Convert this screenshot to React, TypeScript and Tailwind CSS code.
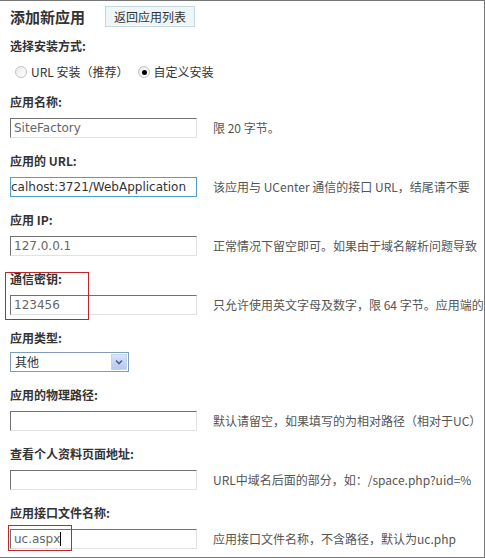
import React from "react";

const cjk = { fontFamily: '"Noto Sans CJK SC", "DejaVu Sans", sans-serif' };
const latin = { fontFamily: '"DejaVu Sans", "Noto Sans CJK SC", sans-serif' };

function Label({ children }: { children: React.ReactNode }) {
  return (
    <div className="h-4 text-[12px] leading-4 font-bold text-[#333] whitespace-nowrap" style={cjk}>
      {children}
    </div>
  );
}

function Field({
  value,
  hint,
  focused,
  caret,
}: {
  value?: string;
  hint: React.ReactNode;
  focused?: boolean;
  caret?: boolean;
}) {
  return (
    <div className="flex items-center h-5 whitespace-nowrap">
      <div
        className={
          "relative w-[187px] h-5 shrink-0 overflow-hidden flex items-center bg-white " +
          (focused
            ? "border border-[#4ba3bf]"
            : "border border-t-[#707070] border-l-[#707070] border-r-[#e2e2e2] border-b-[#e2e2e2]")
        }
      >
        <span
          className={"text-[12px] leading-4 pl-[3px] " + (focused ? "text-[#333] -ml-[3px]" : "text-[#666]")}
          style={latin}
        >
          {value}
        </span>
        {caret && <span className="w-px h-[14px] bg-black" />}
      </div>
      <div className="ml-4 text-[12px] leading-4 text-[#555]" style={cjk}>
        {hint}
      </div>
    </div>
  );
}

function Radio({ checked }: { checked?: boolean }) {
  return (
    <span className="w-[12px] h-[12px] rounded-full border border-[#c4c4c4] bg-gradient-to-br from-[#e9e9e9] to-white flex items-center justify-center shrink-0">
      {checked && <span className="w-[5px] h-[5px] rounded-full bg-black" />}
    </span>
  );
}

export default function App() {
  return (
    <div className="relative w-[485px] h-[558px] overflow-hidden bg-white border-t border-r border-b border-[#777] pl-[10px]">
      {/* title */}
      <div className="flex items-center h-[21px] mt-[5px]">
        <div className="text-[15px] font-bold text-[#333] leading-5" style={cjk}>
          添加新应用
        </div>
        <button
          className="ml-[20px] h-[21px] px-[8px] border border-[#c7d9e0] bg-[#eef6f8] text-[12px] text-[#333] leading-4"
          style={cjk}
        >
          返回应用列表
        </button>
      </div>

      <div className="mt-[11px]">
        <Label>选择安装方式:</Label>
      </div>
      <div className="flex items-center h-4 mt-[10px] pl-[5px] text-[12px] text-[#333]" style={cjk}>
        <Radio />
        <span className="ml-[4px]">URL 安装（推荐）</span>
        <span className="ml-[10px]"><Radio checked /></span>
        <span className="ml-[3px]">自定义安装</span>
      </div>

      <div className="mt-[14px]">
        <Label>应用名称:</Label>
      </div>
      <div className="mt-2">
        <Field value="SiteFactory" hint="限 20 字节。" />
      </div>

      <div className="mt-[15px]">
        <Label>应用的 URL:</Label>
      </div>
      <div className="mt-2">
        <Field value="calhost:3721/WebApplication" focused hint="该应用与 UCenter 通信的接口 URL，结尾请不要" />
      </div>

      <div className="mt-[15px]">
        <Label>应用 IP:</Label>
      </div>
      <div className="mt-2">
        <Field value="127.0.0.1" hint="正常情况下留空即可。如果由于域名解析问题导致" />
      </div>

      <div className="mt-[15px]">
        <Label>通信密钥:</Label>
      </div>
      <div className="mt-2">
        <Field value="123456" hint="只允许使用英文字母及数字，限 64 字节。应用端的" />
      </div>

      <div className="mt-[15px]">
        <Label>应用类型:</Label>
      </div>
      <div className="mt-[6px]">
        <div className="w-[119px] h-5 border border-[#7f9db9] bg-white flex items-center justify-between">
          <span className="text-[12px] text-[#333] pl-[4px] leading-4" style={cjk}>
            其他
          </span>
          <span className="w-[16px] h-[16px] mr-px bg-gradient-to-b from-[#d9e4fb] to-[#b5c8f0] border border-[#c4d3f5] flex items-center justify-center">
            <svg width="8" height="6" viewBox="0 0 8 6">
              <path d="M1 1.5 L4 4.5 L7 1.5" stroke="#4d6185" strokeWidth="1.6" fill="none" />
            </svg>
          </span>
        </div>
      </div>

      <div className="mt-[15px]">
        <Label>应用的物理路径:</Label>
      </div>
      <div className="mt-2">
        <Field value="" hint="默认请留空，如果填写的为相对路径（相对于UC）" />
      </div>

      <div className="mt-[15px]">
        <Label>查看个人资料页面地址:</Label>
      </div>
      <div className="mt-2">
        <Field value="" hint="URL中域名后面的部分，如：/space.php?uid=%" />
      </div>

      <div className="mt-[15px]">
        <Label>应用接口文件名称:</Label>
      </div>
      <div className="mt-2">
        <Field value="uc.aspx" caret hint="应用接口文件名称，不含路径，默认为uc.php" />
      </div>

      {/* annotation boxes */}
      <div className="absolute left-[5px] top-[271px] w-[84px] h-[48px] border border-[#c0272d]" />
      <div className="absolute left-[8px] top-[524px] w-[64px] h-[26px] border border-[#c0272d]" />
    </div>
  );
}
